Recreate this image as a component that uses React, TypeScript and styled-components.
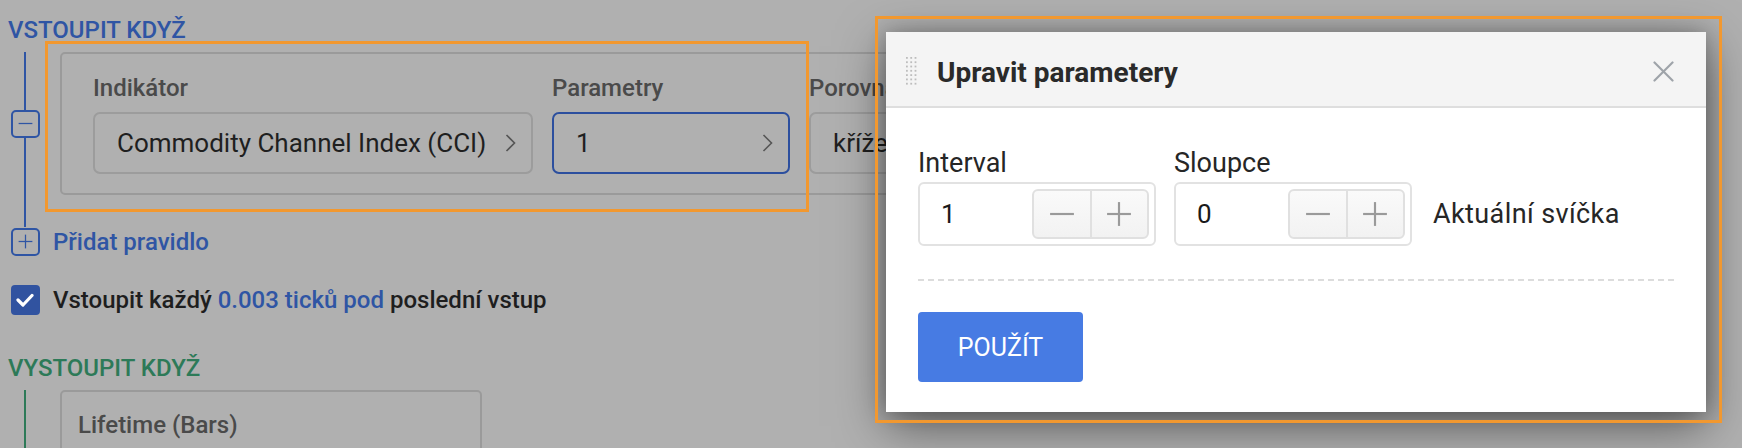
import styled, { createGlobalStyle } from "styled-components";

const BLUE = "#2f55a4";
const GREEN = "#2d7a58";

const GlobalStyle = createGlobalStyle`
  html, body {
    margin: 0;
    padding: 0;
  }
  body {
    font-family: Roboto, "Noto Sans", sans-serif;
    background: #b0b0b0;
  }
`;

const Page = styled.div`
  position: relative;
  width: 1742px;
  height: 448px;
  overflow: hidden;
  box-sizing: border-box;
  padding: 16px 0 0 8px;
  background: #b0b0b0;
`;

const Heading = styled.div<{ $tone: string; $gap?: number }>`
  font-size: 24px;
  line-height: 28px;
  font-weight: 500;
  color: ${(p) => p.$tone};
  margin-top: ${(p) => p.$gap || 0}px;
  margin-bottom: 8px;
`;

const Row = styled.div`
  display: flex;
  gap: 18px;
`;

const Rail = styled.div`
  width: 34px;
  flex-shrink: 0;
  display: flex;
  flex-direction: column;
  align-items: center;
`;

const Line = styled.div<{ $tone: string; $h?: number }>`
  width: 2px;
  background: ${(p) => p.$tone};
  flex: ${(p) => (p.$h ? "none" : "1")};
  height: ${(p) => (p.$h ? `${p.$h}px` : "auto")};
`;

const ToggleBox = styled.div`
  width: 29px;
  height: 28px;
  box-sizing: border-box;
  border: 2px solid ${BLUE};
  border-radius: 5px;
  display: flex;
  align-items: center;
  justify-content: center;
  flex-shrink: 0;
`;

const RuleCard = styled.div`
  display: flex;
  gap: 19px;
  width: 1100px;
  box-sizing: border-box;
  border: 2px solid #9a9a9a;
  border-radius: 5px;
  padding: 20px 32px 19px 31px;
`;

const Field = styled.div`
  display: flex;
  flex-direction: column;
  gap: 10px;
`;

const FieldLabel = styled.div`
  font-size: 24px;
  line-height: 28px;
  font-weight: 500;
  color: #4a4a4a;
  white-space: nowrap;
`;

const SelectBox = styled.div<{ $w: number; $active?: boolean }>`
  width: ${(p) => p.$w}px;
  height: 62px;
  box-sizing: border-box;
  border: 2px solid ${(p) => (p.$active ? "#2c4f9e" : "#9c9c9c")};
  border-radius: 7px;
  padding: 0 15px 0 22px;
  display: flex;
  align-items: center;
  justify-content: space-between;
  font-size: 26px;
  color: #1f1f1f;
  white-space: nowrap;
`;

const AddRow = styled.div`
  display: flex;
  align-items: center;
  gap: 11px;
  height: 29px;
`;

const AddLink = styled.span`
  font-size: 24px;
  font-weight: 500;
  color: ${BLUE};
`;

const CheckRow = styled.div`
  display: flex;
  align-items: center;
  gap: 11px;
  margin-top: 29px;
`;

const CheckBox = styled.div`
  width: 29px;
  height: 30px;
  border-radius: 4px;
  background: #3153a0;
  display: flex;
  align-items: center;
  justify-content: center;
`;

const CheckText = styled.span`
  font-size: 24px;
  font-weight: 500;
  color: #1e1e1e;
  white-space: nowrap;
`;

const Accent = styled.span`
  color: ${BLUE};
`;

const ExitCard = styled.div`
  width: 422px;
  height: 80px;
  box-sizing: border-box;
  border: 2px solid #9a9a9a;
  border-radius: 5px;
  padding: 19px 16px;
`;

const Highlight = styled.div<{ $x: number; $y: number; $w: number; $h: number }>`
  position: absolute;
  left: ${(p) => p.$x}px;
  top: ${(p) => p.$y}px;
  width: ${(p) => p.$w}px;
  height: ${(p) => p.$h}px;
  box-sizing: border-box;
  border: 3px solid #f2982f;
  pointer-events: none;
  z-index: 3;
`;

const Modal = styled.div`
  position: absolute;
  left: 886px;
  top: 32px;
  width: 820px;
  height: 380px;
  background: #fff;
  box-shadow: 0 14px 45px rgba(0, 0, 0, 0.5), 0 0 18px rgba(0, 0, 0, 0.2);
  display: flex;
  flex-direction: column;
  z-index: 2;
`;

const ModalHeader = styled.div`
  height: 76px;
  flex-shrink: 0;
  box-sizing: border-box;
  background: #f4f4f4;
  border-bottom: 2px solid #dedede;
  display: flex;
  align-items: center;
  padding: 4px 32px 0 20px;
`;

const ModalTitle = styled.div`
  margin-left: 20px;
  padding-top: 2px;
  flex: 1;
  font-size: 28px;
  font-weight: 700;
  color: #2a2a2a;
`;

const ModalBody = styled.div`
  padding: 39px 32px 30px 32px;
  display: flex;
  flex-direction: column;
`;

const ParamRow = styled.div`
  display: flex;
  align-items: flex-end;
  gap: 18px;
`;

const ParamField = styled.div`
  display: flex;
  flex-direction: column;
  gap: 3px;
`;

const ParamLabel = styled.div`
  font-size: 27px;
  line-height: 32px;
  color: #262626;
`;

const NumberInput = styled.div`
  width: 238px;
  height: 64px;
  box-sizing: border-box;
  border: 2px solid #e2e2e2;
  border-radius: 6px;
  padding: 5px;
  display: flex;
  align-items: center;
  justify-content: space-between;
`;

const NumberValue = styled.span`
  padding-left: 16px;
  font-size: 26px;
  color: #1a1a1a;
`;

const Stepper = styled.div`
  width: 117px;
  height: 50px;
  box-sizing: border-box;
  border: 2px solid #e0e0e0;
  border-radius: 6px;
  background: linear-gradient(#fafafa, #f2f2f2);
  display: flex;
`;

const StepButton = styled.div<{ $split?: boolean }>`
  flex: 1;
  display: flex;
  align-items: center;
  justify-content: center;
  border-left: ${(p) => (p.$split ? "2px solid #e0e0e0" : "none")};
`;

const Hint = styled.div`
  height: 64px;
  display: flex;
  align-items: center;
  margin-left: 3px;
  font-size: 27px;
  letter-spacing: 0.4px;
  color: #262626;
`;

const Divider = styled.div`
  margin-top: 33px;
  border-top: 2px dashed #dcdcdc;
`;

const ApplyButton = styled.button`
  margin-top: 31px;
  width: 165px;
  height: 70px;
  border: none;
  border-radius: 4px;
  background: #477be3;
  color: #fff;
  font-family: Roboto, "Noto Sans", sans-serif;
  font-size: 25px;
  cursor: pointer;
`;

const Chevron = () => (
  <svg width="11" height="20" viewBox="0 0 11 20">
    <polyline points="1.5,2 9.5,10 1.5,18" fill="none" stroke="#555" strokeWidth="1.6" />
  </svg>
);

const MinusIcon = ({ color, size }: { color: string; size: number }) => (
  <svg width={size} height={size} viewBox="0 0 24 24">
    <line x1="1" y1="12" x2="23" y2="12" stroke={color} strokeWidth="2" />
  </svg>
);

const PlusIcon = ({ color, size }: { color: string; size: number }) => (
  <svg width={size} height={size} viewBox="0 0 24 24">
    <line x1="1" y1="12" x2="23" y2="12" stroke={color} strokeWidth="2" />
    <line x1="12" y1="1" x2="12" y2="23" stroke={color} strokeWidth="2" />
  </svg>
);

const Grip = () => (
  <svg width="11" height="28" viewBox="0 0 11 28">
    {[0, 1, 2].map((c) =>
      [0, 1, 2, 3, 4, 5, 6].map((r) => (
        <rect key={`${c}-${r}`} x={c * 4.3} y={r * 4.3} width="1.8" height="1.8" fill="#bdbdbd" />
      ))
    )}
  </svg>
);

const CloseIcon = () => (
  <svg width="21" height="21" viewBox="0 0 21 21">
    <line x1="1.5" y1="1.5" x2="19.5" y2="19.5" stroke="#9ea3a9" strokeWidth="2.2" strokeLinecap="round" />
    <line x1="19.5" y1="1.5" x2="1.5" y2="19.5" stroke="#9ea3a9" strokeWidth="2.2" strokeLinecap="round" />
  </svg>
);

const Check = () => (
  <svg width="18" height="14" viewBox="0 0 18 14">
    <polyline points="2,7 7,12 16,2.5" fill="none" stroke="#fff" strokeWidth="3.2" strokeLinecap="round" strokeLinejoin="round" />
  </svg>
);

interface NumberFieldProps {
  label: string;
  value: string;
}

const NumberField = ({ label, value }: NumberFieldProps) => (
  <ParamField>
    <ParamLabel>{label}</ParamLabel>
    <NumberInput>
      <NumberValue>{value}</NumberValue>
      <Stepper>
        <StepButton>
          <MinusIcon color="#9a9a9a" size={26} />
        </StepButton>
        <StepButton $split>
          <PlusIcon color="#9a9a9a" size={26} />
        </StepButton>
      </Stepper>
    </NumberInput>
  </ParamField>
);

const App = () => {
  return (
    <Page>
      <GlobalStyle />
      <Heading $tone={BLUE}>VSTOUPIT KDYŽ</Heading>
      <Row>
        <Rail>
          <Line $tone={BLUE} />
          <ToggleBox>
            <MinusIcon color={BLUE} size={15} />
          </ToggleBox>
          <Line $tone={BLUE} />
        </Rail>
        <RuleCard>
          <Field>
            <FieldLabel>Indikátor</FieldLabel>
            <SelectBox $w={440}>
              Commodity Channel Index (CCI)
              <Chevron />
            </SelectBox>
          </Field>
          <Field>
            <FieldLabel>Parametry</FieldLabel>
            <SelectBox $w={238} $active>
              1
              <Chevron />
            </SelectBox>
          </Field>
          <Field>
            <FieldLabel>Porovnání</FieldLabel>
            <SelectBox $w={300}>
              kříže
              <Chevron />
            </SelectBox>
          </Field>
        </RuleCard>
      </Row>
      <Rail>
        <Line $tone={BLUE} $h={32} />
      </Rail>
      <AddRow>
        <Rail>
          <ToggleBox>
            <PlusIcon color={BLUE} size={15} />
          </ToggleBox>
        </Rail>
        <AddLink>Přidat pravidlo</AddLink>
      </AddRow>
      <CheckRow>
        <Rail>
          <CheckBox>
            <Check />
          </CheckBox>
        </Rail>
        <CheckText>
          Vstoupit každý <Accent>0.003 ticků pod</Accent> poslední vstup
        </CheckText>
      </CheckRow>
      <Heading $tone={GREEN} $gap={39}>
        VYSTOUPIT KDYŽ
      </Heading>
      <Row>
        <Rail>
          <Line $tone={GREEN} $h={80} />
        </Rail>
        <ExitCard>
          <FieldLabel>Lifetime (Bars)</FieldLabel>
        </ExitCard>
      </Row>

      <Modal>
        <ModalHeader>
          <Grip />
          <ModalTitle>Upravit parametery</ModalTitle>
          <CloseIcon />
        </ModalHeader>
        <ModalBody>
          <ParamRow>
            <NumberField label="Interval" value="1" />
            <NumberField label="Sloupce" value="0" />
            <Hint>Aktuální svíčka</Hint>
          </ParamRow>
          <Divider />
          <ApplyButton>POUŽÍT</ApplyButton>
        </ModalBody>
      </Modal>

      <Highlight $x={45} $y={41} $w={764} $h={171} />
      <Highlight $x={875} $y={16} $w={847} $h={407} />
    </Page>
  );
};

export default App;
